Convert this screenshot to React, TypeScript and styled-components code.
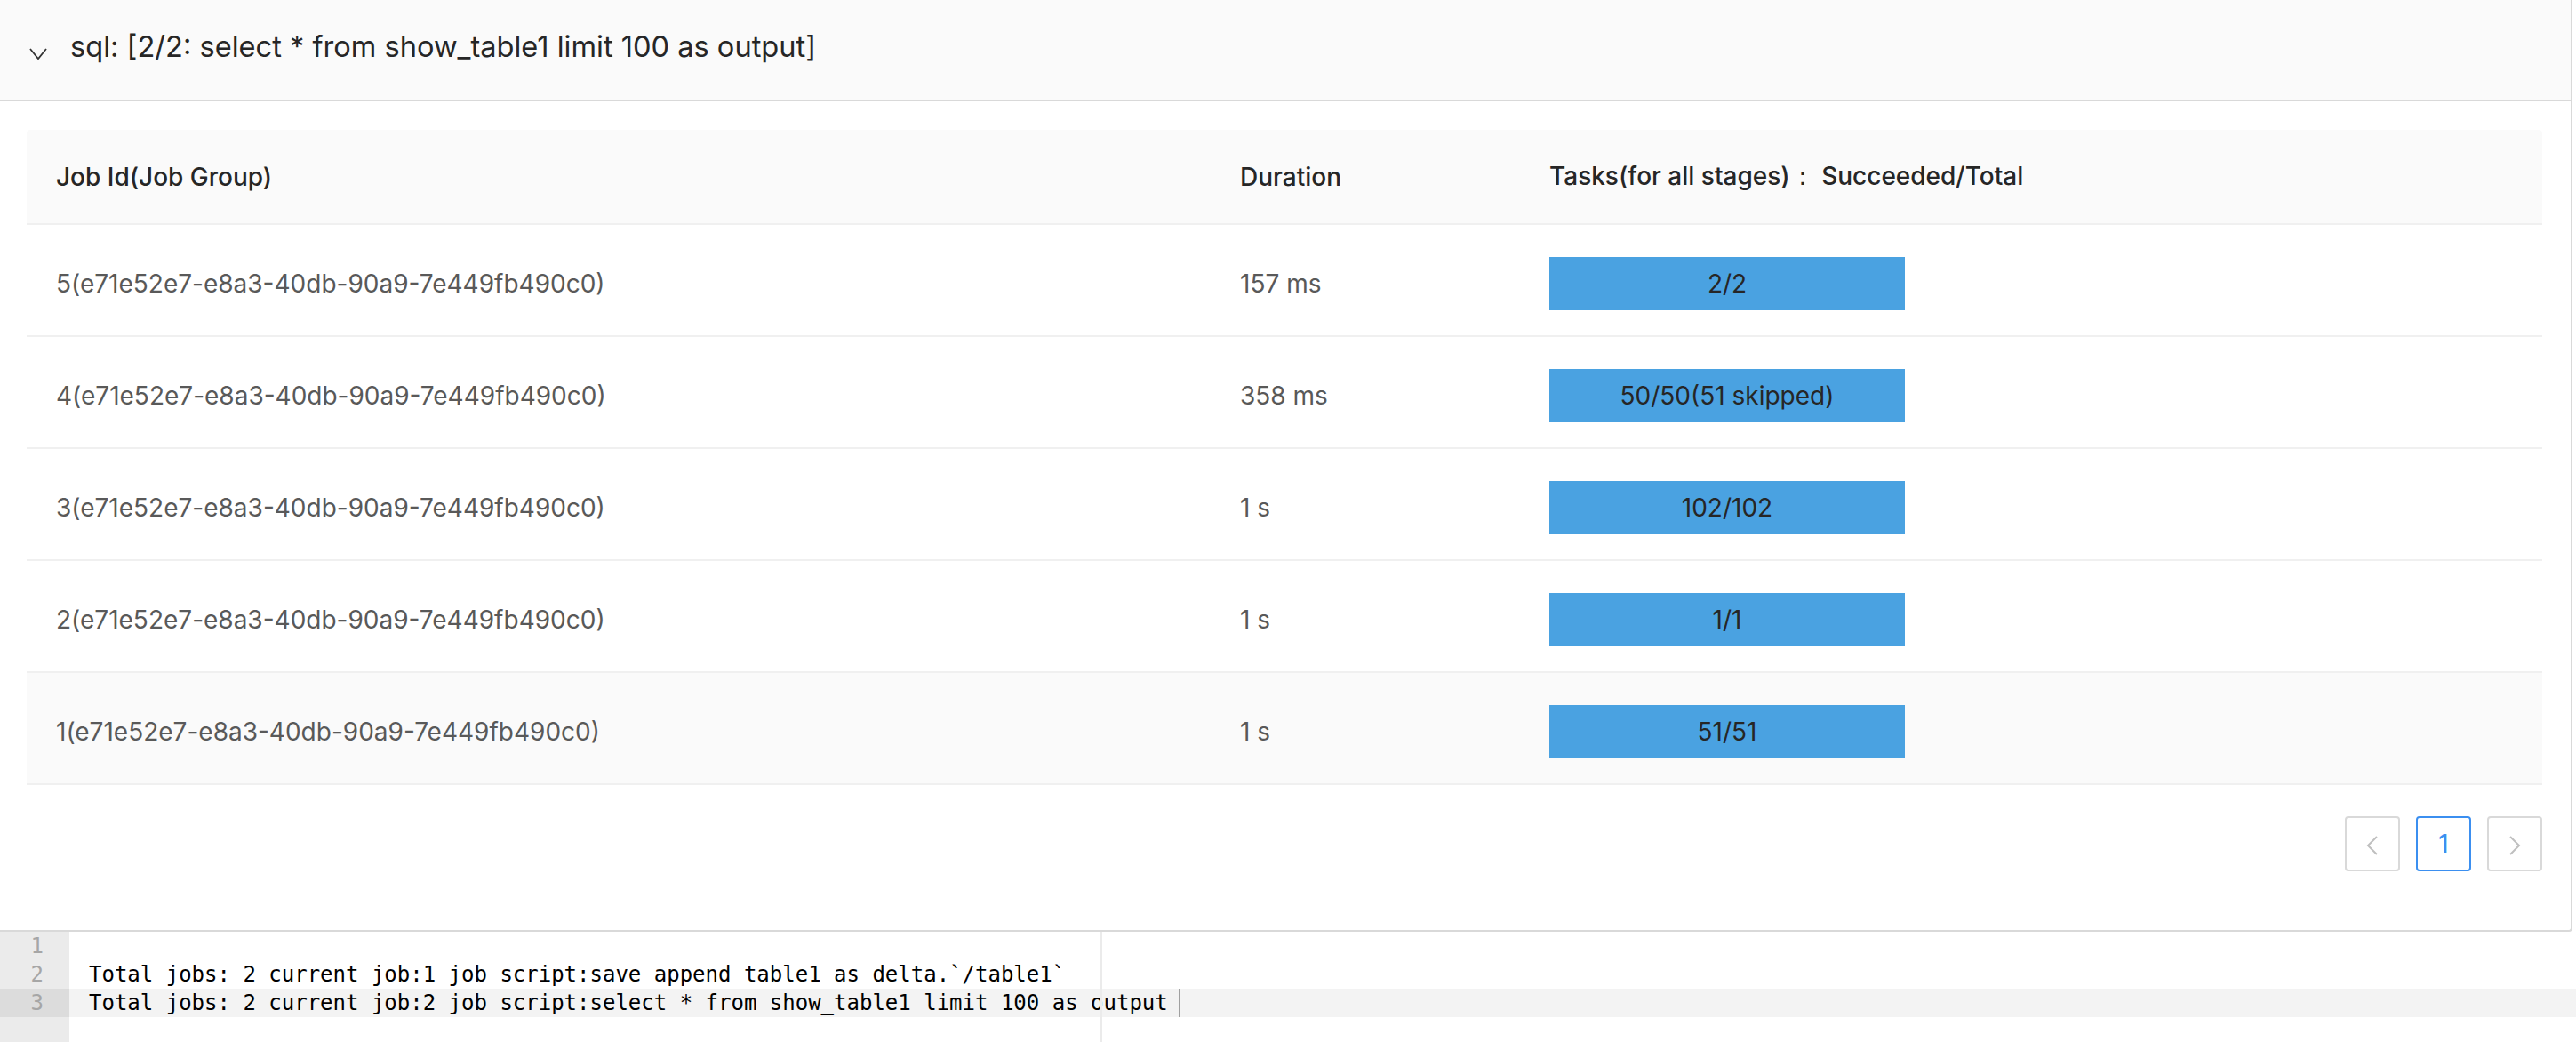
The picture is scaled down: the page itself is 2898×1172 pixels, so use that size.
import styled, { createGlobalStyle } from "styled-components";

const GlobalStyle = createGlobalStyle`
  html, body {
    margin: 0;
    padding: 0;
    background: #ffffff;
  }
  body {
    font-family: Inter, "Liberation Sans", Arial, sans-serif;
  }
`;

const Page = styled.div`
  width: 2898px;
  height: 1172px;
  overflow: hidden;
  display: flex;
  flex-direction: column;
`;

// collapse panel
const Panel = styled.section`
  width: 2894px;
  box-sizing: border-box;
  border-right: 2px solid #d9d9d9;
  border-bottom: 2px solid #d9d9d9;
  border-bottom-right-radius: 4px;
  background: #fff;
`;

const PanelHeader = styled.div`
  height: 114px;
  box-sizing: border-box;
  display: flex;
  align-items: center;
  padding-left: 33px;
  gap: 26px;
  background: #fafafa;
  border-bottom: 2px solid #d9d9d9;
`;

const HeaderArrow = styled.svg`
  width: 20px;
  height: 14px;
  margin-top: 10px;
  flex-shrink: 0;
`;

const Title = styled.span`
  font-size: 32.6px;
  color: #262626;
  margin-top: -8px;
`;

const PanelBody = styled.div`
  padding: 32px 32px 66px 30px;
`;

// table
const Table = styled.table`
  width: 100%;
  border-collapse: separate;
  border-spacing: 0;
  table-layout: fixed;
  font-size: 28px;
`;

const Th = styled.th<{ $w?: number }>`
  width: ${(p) => (p.$w ? `${p.$w}px` : "auto")};
  height: 105px;
  padding: 0 0 0 33px;
  text-align: left;
  font-weight: 500;
  color: #262626;
  background: #fafafa;
  border-bottom: 2px solid #f0f0f0;
  white-space: nowrap;

  &:first-child {
    border-top-left-radius: 4px;
  }
  &:last-child {
    border-top-right-radius: 4px;
  }
`;

const Tr = styled.tr<{ $hover?: boolean }>`
  background: ${(p) => (p.$hover ? "#fafafa" : "#fff")};
`;

const Td = styled.td`
  height: 116px;
  padding: 8px 0 0 33px;
  color: #595959;
  border-bottom: 2px solid #f0f0f0;
  white-space: nowrap;
`;

const TaskBar = styled.div`
  width: 400px;
  height: 60px;
  background: #4aa2e1;
  color: #262626;
  display: flex;
  align-items: center;
  justify-content: center;
`;

// pagination
const Pager = styled.div`
  display: flex;
  justify-content: flex-end;
  gap: 18px;
  margin-top: 35px;
`;

const PageBtn = styled.div<{ $active?: boolean }>`
  width: 62px;
  height: 62px;
  box-sizing: border-box;
  border: 2px solid ${(p) => (p.$active ? "#3b8ff0" : "#d9d9d9")};
  border-radius: 4px;
  display: flex;
  align-items: center;
  justify-content: center;
  font-size: 28px;
  color: ${(p) => (p.$active ? "#3b8ff0" : "#bfbfbf")};
`;

const PagerIcon = styled.svg`
  width: 14px;
  height: 24px;
  margin-top: 4px;
`;

// editor
const Editor = styled.div`
  flex: 1;
  display: grid;
  grid-template-columns: 78px 1fr;
  font-family: "DejaVu Sans Mono", "Liberation Mono", monospace;
  font-size: 24px;
`;

const Gutter = styled.div`
  background: #ebebeb;
`;

const GutterCell = styled.div<{ $active?: boolean }>`
  height: 32px;
  line-height: 32px;
  text-align: right;
  padding-right: 29px;
  color: #a6a6a6;
  background: ${(p) => (p.$active ? "#dcdcdc" : "transparent")};
`;

const Code = styled.div`
  position: relative;
`;

const CodeLine = styled.div<{ $active?: boolean }>`
  height: 32px;
  line-height: 32px;
  padding-left: 22px;
  color: #000;
  white-space: pre;
  background: ${(p) => (p.$active ? "#f3f3f3" : "transparent")};
`;

const PrintMargin = styled.div`
  position: absolute;
  top: 0;
  bottom: 0;
  left: 1160px;
  width: 2px;
  background: #ebebeb;
`;

const Cursor = styled.div`
  position: absolute;
  top: 64px;
  left: 1248px;
  width: 2px;
  height: 32px;
  background: #a0a0a0;
`;

const jobs = [
  { id: "5(e71e52e7-e8a3-40db-90a9-7e449fb490c0)", duration: "157 ms", tasks: "2/2" },
  { id: "4(e71e52e7-e8a3-40db-90a9-7e449fb490c0)", duration: "358 ms", tasks: "50/50(51 skipped)" },
  { id: "3(e71e52e7-e8a3-40db-90a9-7e449fb490c0)", duration: "1 s", tasks: "102/102" },
  { id: "2(e71e52e7-e8a3-40db-90a9-7e449fb490c0)", duration: "1 s", tasks: "1/1" },
  { id: "1(e71e52e7-e8a3-40db-90a9-7e449fb490c0)", duration: "1 s", tasks: "51/51" },
];

const logLines = [
  "",
  "Total jobs: 2 current job:1 job script:save append table1 as delta.`/table1`",
  "Total jobs: 2 current job:2 job script:select * from show_table1 limit 100 as output ",
];

export default function App() {
  return (
    <Page>
      <GlobalStyle />
      <Panel>
        <PanelHeader>
          <HeaderArrow viewBox="0 0 20 14">
            <polyline points="1,1 10,12 19,1" fill="none" stroke="#333" strokeWidth="1.8" />
          </HeaderArrow>
          <Title>sql: [2/2: select * from show_table1 limit 100 as output]</Title>
        </PanelHeader>
        <PanelBody>
          <Table>
            <thead>
              <tr>
                <Th $w={1299}>Job Id(Job Group)</Th>
                <Th $w={315}>Duration</Th>
                <Th>Tasks(for all stages)：&nbsp;Succeeded/Total</Th>
              </tr>
            </thead>
            <tbody>
              {jobs.map((job, i) => (
                <Tr key={job.id} $hover={i === jobs.length - 1}>
                  <Td>{job.id}</Td>
                  <Td>{job.duration}</Td>
                  <Td>
                    <TaskBar>{job.tasks}</TaskBar>
                  </Td>
                </Tr>
              ))}
            </tbody>
          </Table>
          <Pager>
            <PageBtn>
              <PagerIcon viewBox="0 0 14 24">
                <polyline points="12,2 2,12 12,22" fill="none" stroke="#bfbfbf" strokeWidth="2" />
              </PagerIcon>
            </PageBtn>
            <PageBtn $active>1</PageBtn>
            <PageBtn>
              <PagerIcon viewBox="0 0 14 24">
                <polyline points="2,2 12,12 2,22" fill="none" stroke="#bfbfbf" strokeWidth="2" />
              </PagerIcon>
            </PageBtn>
          </Pager>
        </PanelBody>
      </Panel>

      {/* log output */}
      <Editor>
        <Gutter>
          {logLines.map((_, i) => (
            <GutterCell key={i} $active={i === logLines.length - 1}>
              {i + 1}
            </GutterCell>
          ))}
        </Gutter>
        <Code>
          {logLines.map((line, i) => (
            <CodeLine key={i} $active={i === logLines.length - 1}>
              {line}
            </CodeLine>
          ))}
          <PrintMargin />
          <Cursor />
        </Code>
      </Editor>
    </Page>
  );
}
